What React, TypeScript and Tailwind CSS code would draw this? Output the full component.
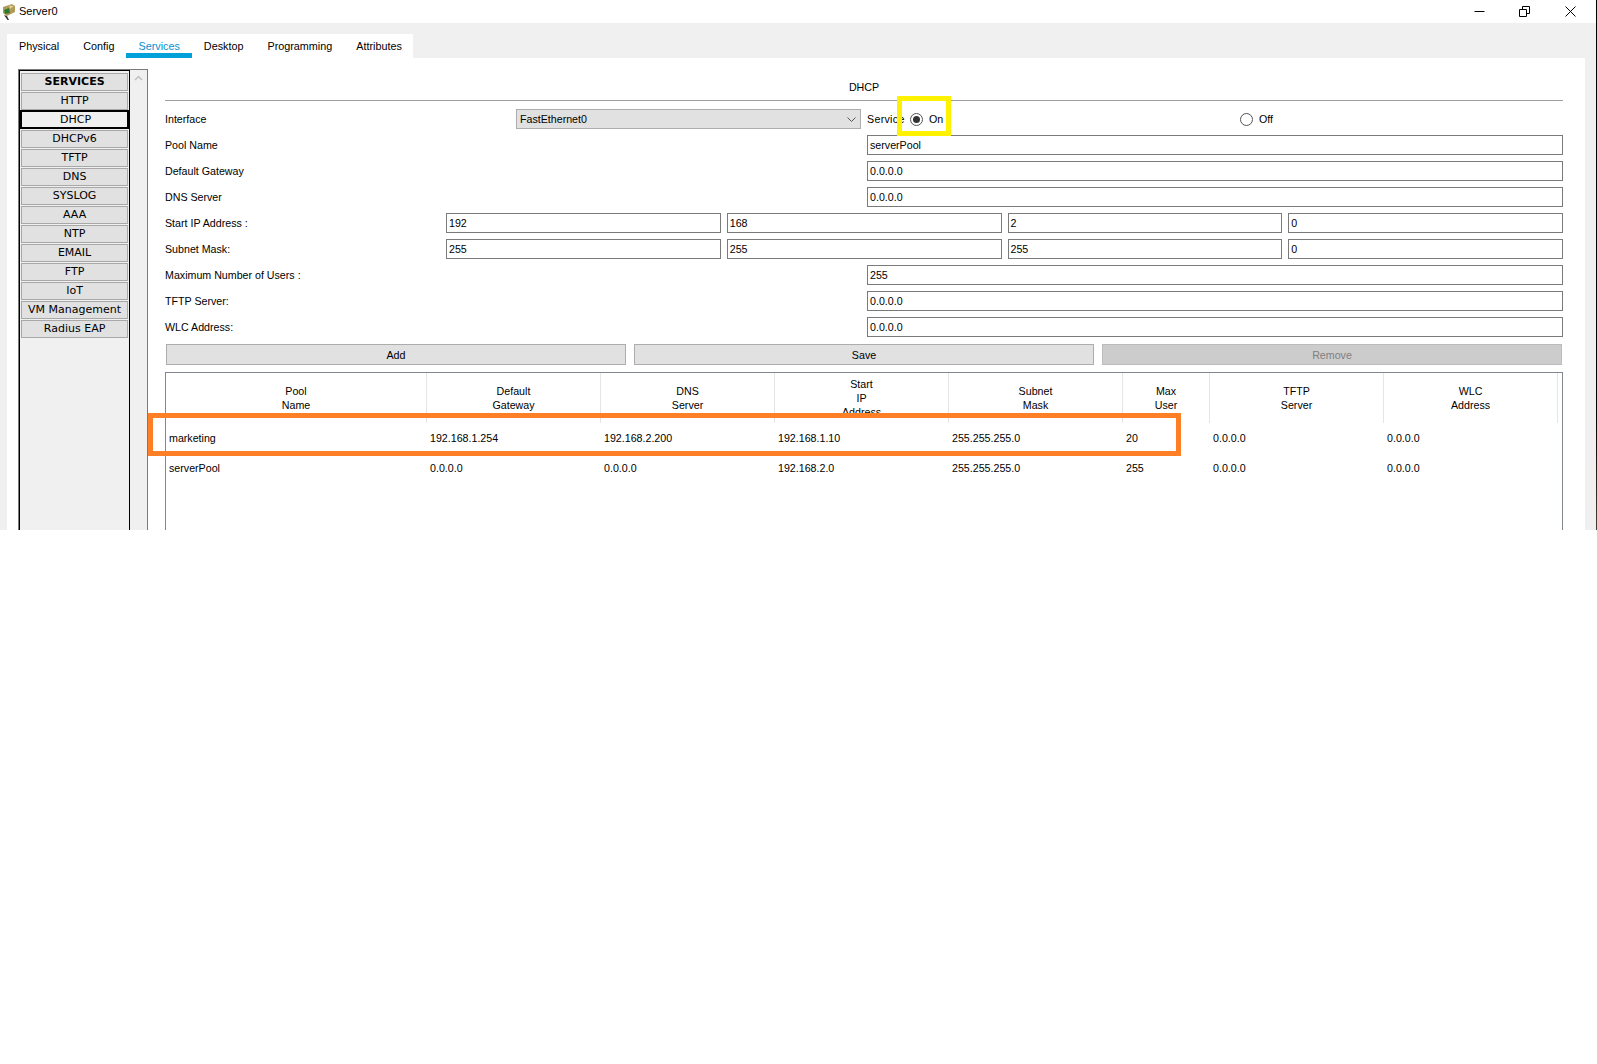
const font = "font-['Liberation_Sans',Arial,sans-serif]"

const services = ['HTTP', 'DHCP', 'DHCPv6', 'TFTP', 'DNS', 'SYSLOG', 'AAA', 'NTP', 'EMAIL', 'FTP', 'IoT', 'VM Management', 'Radius EAP']
const tabs = ['Physical', 'Config', 'Services', 'Desktop', 'Programming', 'Attributes']

const columns = [
  { w: 'w-[261px]', lines: ['Pool', 'Name'] },
  { w: 'w-[174px]', lines: ['Default', 'Gateway'] },
  { w: 'w-[174px]', lines: ['DNS', 'Server'] },
  { w: 'w-[174px]', lines: ['Start', 'IP', 'Address'] },
  { w: 'w-[174px]', lines: ['Subnet', 'Mask'] },
  { w: 'w-[87px]', lines: ['Max', 'User'] },
  { w: 'w-[174px]', lines: ['TFTP', 'Server'] },
  { w: 'w-[174px]', lines: ['WLC', 'Address'] },
]

const pools = [
  ['marketing', '192.168.1.254', '192.168.2.200', '192.168.1.10', '255.255.255.0', '20', '0.0.0.0', '0.0.0.0'],
  ['serverPool', '0.0.0.0', '0.0.0.0', '192.168.2.0', '255.255.255.0', '255', '0.0.0.0', '0.0.0.0'],
]

function Field({ value, className = '' }: { value: string; className?: string }) {
  return (
    <div className={`flex h-5 items-center border border-[#7a7a7a] bg-white pl-[2px] text-[10.67px] text-black ${className}`}>
      {value}
    </div>
  )
}

function Row({ label, value }: { label: string; value: string }) {
  return (
    <div className="flex h-5 shrink-0 items-center">
      <span className="w-[702px] shrink-0 text-[10.67px]">{label}</span>
      <Field value={value} className="flex-1" />
    </div>
  )
}

function IpRow({ label, values }: { label: string; values: string[] }) {
  return (
    <div className="flex h-5 shrink-0 items-center">
      <span className="w-[281px] shrink-0 text-[10.67px]">{label}</span>
      <div className="flex flex-1 gap-[6px]">
        {values.map((v, i) => (
          <Field key={i} value={v} className="flex-1" />
        ))}
      </div>
    </div>
  )
}

export default function App() {
  return (
    <div className={`${font} min-h-[1064px] bg-white text-black`}>
      <div className="flex h-[530px]">
        <div className="min-w-0 flex-1">
          <div className="flex h-[23px] items-center">
            <svg width="16" height="18" viewBox="0 0 16 18" className="ml-[1px] shrink-0">
              <path d="M2 4 L11 1 L14 3 L14 9 L6 13 L2 10 Z" fill="#b09a5a" />
              <path d="M3 7 L8 5 L9 10 L4 11 Z" fill="#2f7a2f" />
              <path d="M8 2.5 L13 3 L9 6 Z" fill="#e0cf94" />
              <path d="M3 12 L6 13 L8 17 L6.5 17 Z" fill="#333" />
            </svg>
            <span className="ml-[2px] text-[11px]">Server0</span>
            <div className="ml-auto flex items-center">
              <svg width="11" height="11" viewBox="0 0 11 11" className="mr-[34px]"><path d="M0.5 5.5 H10.5" stroke="#000" /></svg>
              <svg width="11" height="11" viewBox="0 0 11 11" className="mr-[35px]"><path d="M0.5 3.5 H7.5 V10.5 H0.5 Z M3.5 3.5 V0.5 H10.5 V7.5 H7.5" stroke="#000" fill="none" /></svg>
              <svg width="11" height="11" viewBox="0 0 11 11" className="mr-[20px]"><path d="M0.5 0.5 L10.5 10.5 M10.5 0.5 L0.5 10.5" stroke="#000" /></svg>
            </div>
          </div>

          <div className="h-[507px] overflow-hidden bg-[#f0f0f0] pl-[7px] pr-[11px] pt-[11px]">
            <div className="flex h-[24px] w-[406px] bg-white">
              {tabs.map((t) => (
                <div
                  key={t}
                  className={
                    t === 'Services'
                      ? 'flex h-full items-center border-b-[5px] border-[#00a0d8] px-3 pt-[5px] text-[10.8px] text-[#0a8fd0]'
                      : 'flex h-full items-center px-3 text-[10.8px]'
                  }
                >
                  {t}
                </div>
              ))}
            </div>

            <div className="flex h-[472px] bg-white pl-[11px] pt-[11px]">
              <div className="flex h-[500px] w-[130px] shrink-0 border-l border-t border-[#7a7a7a]">
                <div className="flex w-[112px] flex-col gap-[1px] border-x-[1.5px] border-t border-black bg-[#f0f0f0] px-[1px] pt-[2px] font-['DejaVu_Sans',sans-serif] text-[11px]">
                  <div className="flex h-[18px] shrink-0 items-center justify-center border border-[#a8a8a8] bg-[#e1e1e1] font-bold">SERVICES</div>
                  {services.map((s) =>
                    s === 'DHCP' ? (
                      <div key={s} className="-mx-[1px] -mt-[1px] flex h-[19px] shrink-0 items-center justify-center border-2 border-black bg-[#f0f0f0] pl-[2px] pt-[2px]">{s}</div>
                    ) : (
                      <div key={s} className="flex h-[18px] shrink-0 items-center justify-center border border-[#a8a8a8] bg-[#e1e1e1]">{s}</div>
                    ),
                  )}
                </div>
                <div className="flex w-[18px] justify-center border-r border-[#7a7a7a] bg-[#f0f0f0] pt-[5px]">
                  <svg width="9" height="6" viewBox="0 0 9 6"><path d="M1 5 L4.5 1.5 L8 5" stroke="#c0c0c0" strokeWidth="1.5" fill="none" /></svg>
                </div>
              </div>

              <div className="ml-[17px] flex w-[1398px] flex-col">
                <div className="flex h-[31px] shrink-0 items-center justify-center pt-[5px] text-[10.67px]">DHCP</div>
                <div className="h-px shrink-0 bg-[#a0a0a0]" />
                <div className="mt-[8px] flex h-5 shrink-0 items-center text-[10.67px]">
                  <span className="w-[351px]">Interface</span>
                  <div className="flex h-5 w-[345px] items-center justify-between border border-[#adadad] bg-[#e1e1e1] pl-[3px] pr-[4px]">
                    FastEthernet0
                    <svg width="9" height="5" viewBox="0 0 9 5"><path d="M0.5 0.5 L4.5 4.5 L8.5 0.5" stroke="#555" fill="none" /></svg>
                  </div>
                  <span className="ml-[6px] w-[43px] tracking-[0.3px]">Service</span>
                  <span className="relative h-[13px] w-[13px] rounded-full border border-[#555] bg-white">
                    <span className="absolute left-[2px] top-[2px] h-[7px] w-[7px] rounded-full bg-[#333]" />
                  </span>
                  <span className="ml-[6px] w-[14px]">On</span>
                  <span className="ml-[297px] h-[13px] w-[13px] rounded-full border border-[#555] bg-white" />
                  <span className="ml-[6px]">Off</span>
                </div>
                <div className="mt-[6px] flex shrink-0 flex-col gap-[6px]">
                  <Row label="Pool Name" value="serverPool" />
                  <Row label="Default Gateway" value="0.0.0.0" />
                  <Row label="DNS Server" value="0.0.0.0" />
                  <IpRow label="Start IP Address :" values={['192', '168', '2', '0']} />
                  <IpRow label="Subnet Mask:" values={['255', '255', '255', '0']} />
                  <Row label="Maximum Number of Users :" value="255" />
                  <Row label="TFTP Server:" value="0.0.0.0" />
                  <Row label="WLC Address:" value="0.0.0.0" />
                </div>
                <div className="mt-[7px] flex shrink-0 gap-2 px-px text-[10.67px]">
                  <div className="flex h-[21px] flex-1 items-center justify-center border border-[#adadad] bg-[#e1e1e1]">Add</div>
                  <div className="flex h-[21px] flex-1 items-center justify-center border border-[#adadad] bg-[#e1e1e1]">Save</div>
                  <div className="flex h-[21px] flex-1 items-center justify-center border border-[#bcbcbc] bg-[#cccccc] text-[#7f7f7f]">Remove</div>
                </div>
                <div className="mt-[7px] h-[300px] shrink-0 border border-[#828790] text-[10.67px]">
                  <div className="flex h-[50px] overflow-hidden">
                    {columns.map((c) => (
                      <div key={c.lines.join()} className={`${c.w} flex shrink-0 flex-col items-center justify-center border-r border-[#e5e5e5] leading-[14px]`}>
                        {c.lines.map((l) => (
                          <span key={l}>{l}</span>
                        ))}
                      </div>
                    ))}
                  </div>
                  {pools.map((p) => (
                    <div key={p[0]} className="flex h-[30px] items-center">
                      {p.map((v, i) => (
                        <div key={i} className={`${columns[i].w} shrink-0 pl-[3px]`}>{v}</div>
                      ))}
                    </div>
                  ))}
                </div>
              </div>
            </div>
          </div>
        </div>
        <div className="w-px bg-gradient-to-b from-black from-70% to-[#4a3f33]" />
      </div>

      {/* annotations drawn on top of the screenshot */}
      <div className="absolute left-[897px] top-[96px] h-[40px] w-[54px] border-[5px] border-[#fff200]" />
      <div className="absolute left-[148px] top-[413px] h-[43px] w-[1033px] border-[5px] border-[#ff7f27]" />
    </div>
  )
}
